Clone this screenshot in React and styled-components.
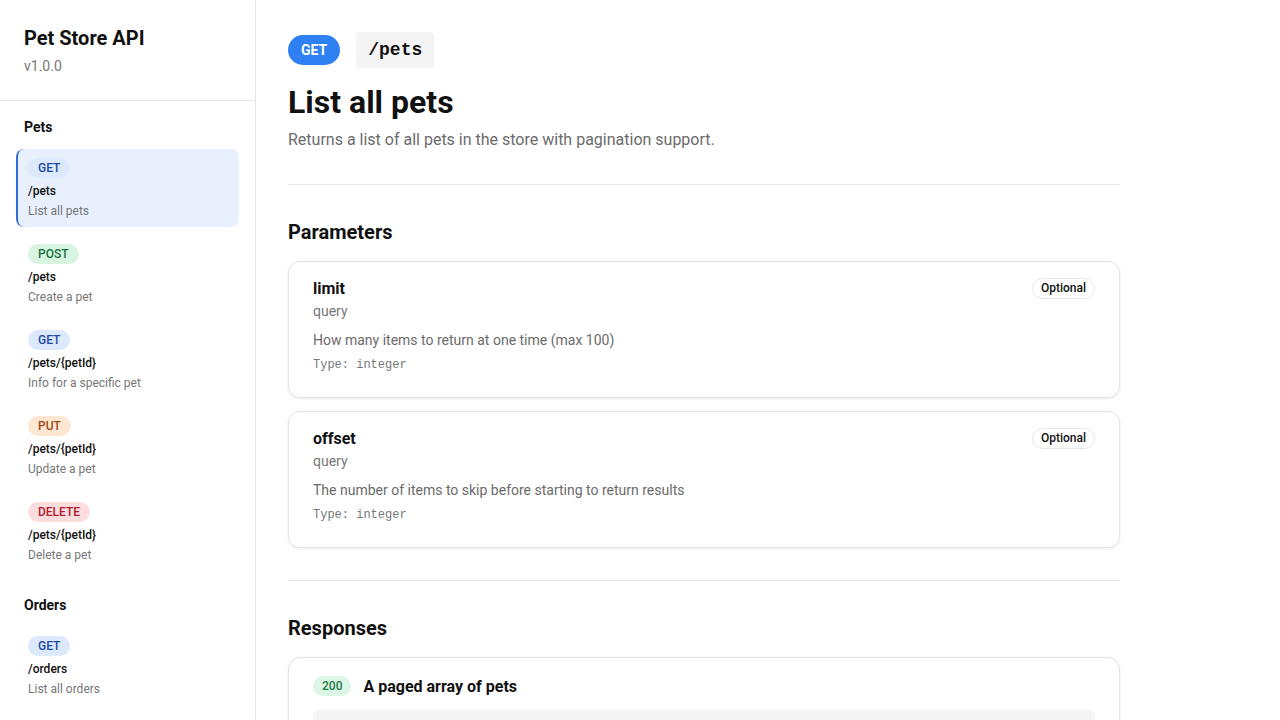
import React from "react";
import styled, { createGlobalStyle } from "styled-components";

const GlobalStyle = createGlobalStyle`
  html, body {
    margin: 0;
    padding: 0;
    background: #fff;
  }
  body {
    font-family: Roboto, "Liberation Sans", Arial, sans-serif;
    color: #111;
    overflow: hidden;
  }
  * {
    box-sizing: border-box;
  }
`;

const methodColors = {
  GET: { bg: "#dce8fb", fg: "#1b4aa8" },
  POST: { bg: "#d8f5e2", fg: "#17703c" },
  PUT: { bg: "#fde7d2", fg: "#a3461a" },
  DELETE: { bg: "#fbdde0", fg: "#ae1a2c" },
};

const Layout = styled.div`
  display: flex;
  height: 100vh;
  width: 100%;
`;

const Sidebar = styled.aside`
  width: 256px;
  flex-shrink: 0;
  height: 100vh;
  border-right: 1px solid #e6e6e6;
  overflow: hidden;
  display: flex;
  flex-direction: column;
`;

const SidebarHeader = styled.div`
  padding: 24px;
  border-bottom: 1px solid #e6e6e6;
`;

const ApiTitle = styled.h1`
  margin: 0;
  font-size: 20px;
  line-height: 28px;
  font-weight: 700;
`;

const Version = styled.div`
  margin-top: 4px;
  font-size: 14px;
  line-height: 20px;
  color: #777;
`;

const Nav = styled.nav`
  padding: 16px;
  display: flex;
  flex-direction: column;
`;

const NavGroup = styled.div`
  display: flex;
  flex-direction: column;
  gap: 8px;
  margin-bottom: 24px;
`;

const GroupTitle = styled.div`
  padding-left: 8px;
  font-size: 14px;
  line-height: 20px;
  font-weight: 700;
  margin-bottom: 4px;
`;

const NavItem = styled.div`
  display: flex;
  flex-direction: column;
  align-items: flex-start;
  padding: 9px 12px 7px 10px;
  border-radius: 8px;
  background: ${(p) => (p.$active ? "#e8f0fe" : "transparent")};
  border-left: 2px solid ${(p) => (p.$active ? "#2f6fdc" : "transparent")};
`;

const MethodTag = styled.span`
  display: inline-flex;
  align-items: center;
  height: 20px;
  padding: 0 10px;
  border-radius: 10px;
  font-size: 12px;
  font-weight: 500;
  background: ${(p) => methodColors[p.$method].bg};
  color: ${(p) => methodColors[p.$method].fg};
`;

const NavPath = styled.div`
  margin-top: 4px;
  font-size: 12px;
  line-height: 18px;
  font-weight: 500;
  color: #111;
`;

const NavDesc = styled.div`
  margin-top: 2px;
  font-size: 12px;
  line-height: 18px;
  color: #777;
`;

const Main = styled.main`
  flex: 1;
  height: 100vh;
  overflow: hidden;
`;

const Content = styled.div`
  max-width: 896px;
  padding: 32px;
`;

const Section = styled.section`
  padding-bottom: 32px;
  border-bottom: 1px solid #e6e6e6;
  & + & {
    padding-top: 33px;
  }
  &:last-child {
    border-bottom: none;
  }
`;

const EndpointRow = styled.div`
  display: flex;
  align-items: center;
  gap: 16px;
`;

const MethodPill = styled.span`
  display: inline-flex;
  align-items: center;
  height: 30px;
  padding: 0 13px;
  border-radius: 15px;
  background: #2f80f3;
  color: #fff;
  font-size: 14px;
  font-weight: 700;
`;

const PathCode = styled.code`
  display: inline-block;
  padding: 6px 12px;
  background: #f4f4f4;
  border-radius: 4px;
  font-family: "Liberation Mono", "Courier New", monospace;
  font-size: 18px;
  line-height: 24px;
  font-weight: 700;
  color: #111;
`;

const PageTitle = styled.h2`
  margin: 14px 0 0;
  font-size: 32px;
  line-height: 40px;
  font-weight: 700;
`;

const PageDesc = styled.p`
  margin: 6px 0 0;
  font-size: 16px;
  line-height: 24px;
  color: #6b6b6b;
`;

const SectionTitle = styled.h3`
  margin: 0 0 15px;
  font-size: 20px;
  line-height: 28px;
  font-weight: 700;
`;

const CardList = styled.div`
  display: flex;
  flex-direction: column;
  gap: 13px;
`;

const Card = styled.div`
  border: 1px solid #e3e3e3;
  border-radius: 12px;
  background: #fff;
  box-shadow: 0 1px 3px rgba(0, 0, 0, 0.08);
  padding: ${(p) => p.$pad || "14px 24px 24px"};
`;

const CardHead = styled.div`
  display: flex;
  align-items: center;
  justify-content: space-between;
  gap: 12px;
  height: 24px;
`;

const ParamName = styled.div`
  font-size: 16px;
  font-weight: 700;
`;

const OptionalTag = styled.span`
  display: inline-flex;
  align-items: center;
  height: 21px;
  padding: 0 8px;
  border: 1px solid #e6e6e6;
  border-radius: 11px;
  font-size: 12px;
  font-weight: 500;
  color: #111;
`;

const ParamIn = styled.div`
  margin-top: 1px;
  font-size: 14px;
  line-height: 20px;
  color: #777;
`;

const ParamDesc = styled.div`
  margin-top: 9px;
  font-size: 14px;
  line-height: 20px;
  color: #6b6b6b;
`;

const ParamType = styled.div`
  margin-top: 7px;
  font-family: "Liberation Mono", "Courier New", monospace;
  font-size: 12px;
  line-height: 16px;
  color: #777;
`;

const ResponseHead = styled.div`
  display: flex;
  align-items: center;
  gap: 12px;
  height: 24px;
`;

const StatusTag = styled.span`
  display: inline-flex;
  align-items: center;
  height: 20px;
  padding: 0 9px;
  border-radius: 10px;
  background: #dcf6e6;
  color: #1c7a44;
  font-size: 12px;
  font-weight: 500;
`;

const ResponseTitle = styled.div`
  font-size: 16px;
  font-weight: 700;
`;

const CodeBlock = styled.pre`
  margin: 12px 0 0;
  padding: 24px 16px 16px;
  border-radius: 6px;
  background: #f5f5f5;
  font-family: "Liberation Mono", "Courier New", monospace;
  font-size: 13px;
  line-height: 20px;
  color: #333;
`;

const navGroups = [
  {
    title: "Pets",
    items: [
      { method: "GET", path: "/pets", desc: "List all pets", active: true },
      { method: "POST", path: "/pets", desc: "Create a pet" },
      { method: "GET", path: "/pets/{petId}", desc: "Info for a specific pet" },
      { method: "PUT", path: "/pets/{petId}", desc: "Update a pet" },
      { method: "DELETE", path: "/pets/{petId}", desc: "Delete a pet" },
    ],
  },
  {
    title: "Orders",
    items: [{ method: "GET", path: "/orders", desc: "List all orders" }],
  },
];

const params = [
  {
    name: "limit",
    desc: "How many items to return at one time (max 100)",
    type: "integer",
  },
  {
    name: "offset",
    desc: "The number of items to skip before starting to return results",
    type: "integer",
  },
];

const sample = `[
  {
    "id": 1,
    "name": "Fluffy",
    "tag": "cat"
  }
]`;

export default function App() {
  return (
    <>
      <GlobalStyle />
      <Layout>
        <Sidebar>
          <SidebarHeader>
            <ApiTitle>Pet Store API</ApiTitle>
            <Version>v1.0.0</Version>
          </SidebarHeader>
          <Nav>
            {navGroups.map((g) => (
              <NavGroup key={g.title}>
                <GroupTitle>{g.title}</GroupTitle>
                {g.items.map((it, i) => (
                  <NavItem key={i} $active={it.active}>
                    <MethodTag $method={it.method}>{it.method}</MethodTag>
                    <NavPath>{it.path}</NavPath>
                    <NavDesc>{it.desc}</NavDesc>
                  </NavItem>
                ))}
              </NavGroup>
            ))}
          </Nav>
        </Sidebar>
        <Main>
          <Content>
            <Section>
              <EndpointRow>
                <MethodPill>GET</MethodPill>
                <PathCode>/pets</PathCode>
              </EndpointRow>
              <PageTitle>List all pets</PageTitle>
              <PageDesc>
                Returns a list of all pets in the store with pagination support.
              </PageDesc>
            </Section>
            <Section>
              <SectionTitle>Parameters</SectionTitle>
              <CardList>
                {params.map((p) => (
                  <Card key={p.name}>
                    <CardHead>
                      <ParamName>{p.name}</ParamName>
                      <OptionalTag>Optional</OptionalTag>
                    </CardHead>
                    <ParamIn>query</ParamIn>
                    <ParamDesc>{p.desc}</ParamDesc>
                    <ParamType>Type: {p.type}</ParamType>
                  </Card>
                ))}
              </CardList>
            </Section>
            <Section>
              <SectionTitle>Responses</SectionTitle>
              <CardList>
                <Card $pad="16px 24px 24px">
                  <ResponseHead>
                    <StatusTag>200</StatusTag>
                    <ResponseTitle>A paged array of pets</ResponseTitle>
                  </ResponseHead>
                  <CodeBlock>{sample}</CodeBlock>
                </Card>
              </CardList>
            </Section>
          </Content>
        </Main>
      </Layout>
    </>
  );
}
